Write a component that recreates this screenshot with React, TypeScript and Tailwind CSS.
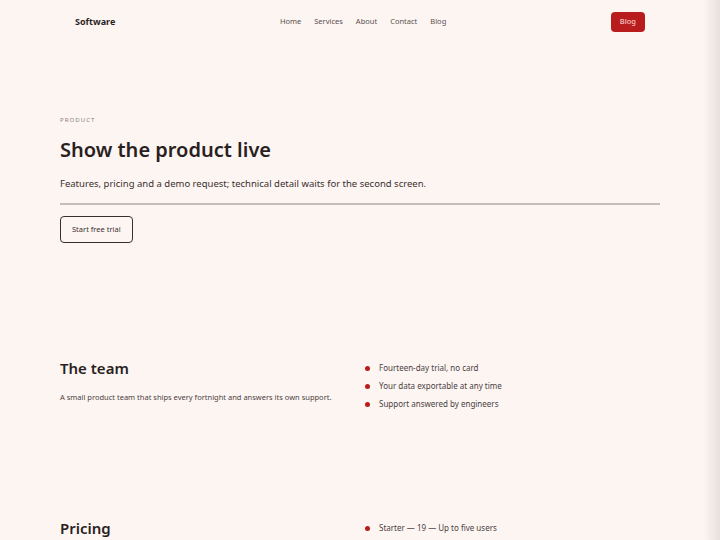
import React from "react";

const navLinks = ["Home", "Services", "About", "Contact", "Blog"];

const teamPoints = [
  "Fourteen-day trial, no card",
  "Your data exportable at any time",
  "Support answered by engineers",
];

const pricingPoints = ["Starter — 19 — Up to five users"];

function Bullets({ items }: { items: string[] }) {
  return (
    <ul className="flex flex-col gap-[8px] pt-[6px]">
      {items.map((item) => (
        <li key={item} className="flex items-center gap-[9px] text-[8px] leading-[10px] text-[#4a3f3f]">
          <span className="h-[5px] w-[5px] rounded-full bg-[#b91c1c]" />
          {item}
        </li>
      ))}
    </ul>
  );
}

export default function App() {
  return (
    <div className="relative min-h-[540px] bg-[#fdf5f2] font-['Noto_Sans',sans-serif] text-[#2a1f1f]">
      <header className="flex h-[42px] items-center justify-between px-[75px] pt-[1px]">
        <span className="text-[9px] font-bold">Software</span>
        <nav className="flex items-center gap-[13px] text-[7.5px] text-[#5a5050]">
          {navLinks.map((link) => (
            <a key={link} href="#">
              {link}
            </a>
          ))}
        </nav>
        <button className="h-[20px] rounded-[4px] bg-[#b91c1c] px-[9px] text-[7.5px] font-medium text-[#f6c6c6]">
          Blog
        </button>
      </header>

      <main className="mx-[60px]">
        <section className="pt-[74px]">
          <p className="text-[6px] uppercase tracking-[0.18em] text-[#8a8080]">Product</p>
          <h1 className="mt-[12px] text-[20px] font-semibold leading-[26px]">Show the product live</h1>
          <p className="mt-[14px] text-[9.5px] text-[#3a3030]">
            Features, pricing and a demo request; technical detail waits for the second screen.
          </p>
          <div className="mt-[12px] h-[2px] bg-[#c4bcb8]" />
          <button className="mt-[11px] h-[27px] rounded-[4px] border border-[#3a2e2e] px-[11px] text-[7.5px] text-[#3a3030]">
            Start free trial
          </button>
        </section>

        <section className="grid grid-cols-2 gap-[10px] pt-[114px]">
          <div>
            <h2 className="mt-[1px] text-[15px] font-semibold leading-[20px]">The team</h2>
            <p className="mt-[14px] text-[7.5px] text-[#4a3f3f]">
              A small product team that ships every fortnight and answers its own support.
            </p>
          </div>
          <Bullets items={teamPoints} />
        </section>

        <section className="grid grid-cols-2 gap-[10px] pt-[108px]">
          <div>
            <h2 className="mt-[1px] text-[15px] font-semibold leading-[20px]">Pricing</h2>
          </div>
          <Bullets items={pricingPoints} />
        </section>
      </main>

      <div className="pointer-events-none fixed inset-y-0 right-0 w-[16px] bg-gradient-to-r from-transparent to-[#e6e0dd]" />
    </div>
  );
}
